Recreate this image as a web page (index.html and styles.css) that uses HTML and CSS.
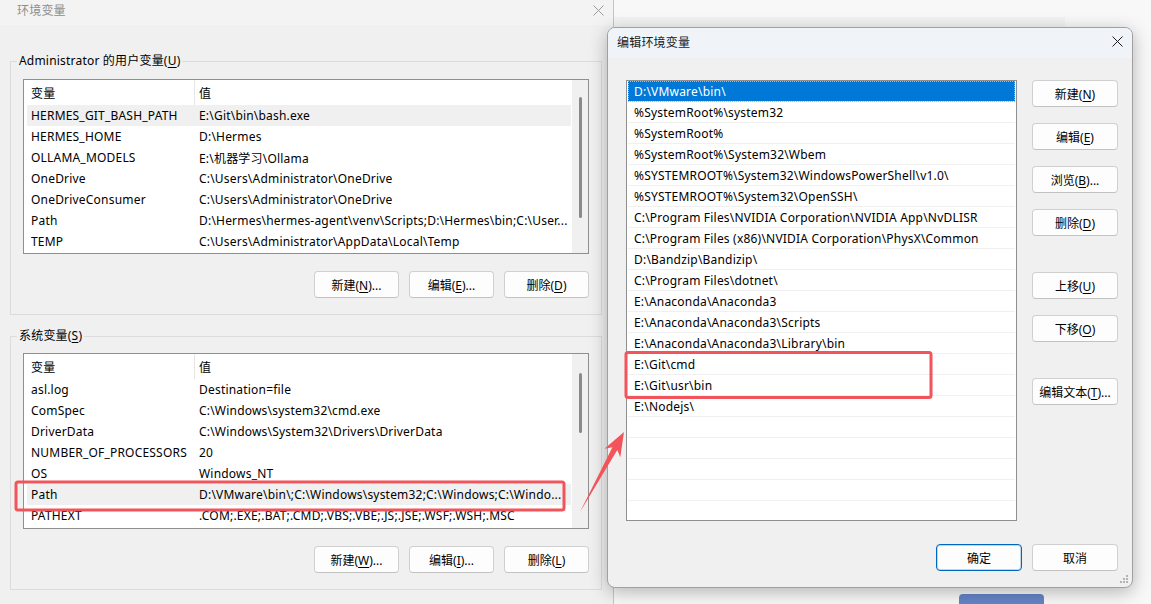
FILE: index.html
```html
<!DOCTYPE html>
<html lang="zh-CN">
<head>
    <meta charset="UTF-8">
    <meta name="viewport" content="width=device-width, initial-scale=1.0">
    <title>环境变量</title>
    <link rel="stylesheet" href="styles.css">
</head>
<body>
<div class="desktop">

    <!-- Fenetre en arriere-plan -->
    <div class="back-window">
        <div class="back-band"></div>
        <div class="back-button"></div>
    </div>

    <!-- Fenetre "环境变量" -->
    <div class="env-window">
        <div class="titlebar inactive">
            <span>环境变量</span>
            <svg class="close" width="11" height="11" viewBox="0 0 11 11"><path d="M0.5 0.5L10.5 10.5M10.5 0.5L0.5 10.5" stroke="#9a9a9a" stroke-width="1"/></svg>
        </div>

        <fieldset class="group user-group">
            <legend>Administrator 的用户变量(<u>U</u>)</legend>
            <div class="listview user-list">
                <div class="lv-body">
                    <div class="lv-head"><span class="c1">变量</span><span class="c2">值</span></div>
                    <div class="lv-row hl"><span class="c1">HERMES_GIT_BASH_PATH</span><span class="c2">E:\Git\bin\bash.exe</span></div>
                    <div class="lv-row"><span class="c1">HERMES_HOME</span><span class="c2">D:\Hermes</span></div>
                    <div class="lv-row"><span class="c1">OLLAMA_MODELS</span><span class="c2">E:\机器学习\Ollama</span></div>
                    <div class="lv-row"><span class="c1">OneDrive</span><span class="c2">C:\Users\Administrator\OneDrive</span></div>
                    <div class="lv-row"><span class="c1">OneDriveConsumer</span><span class="c2">C:\Users\Administrator\OneDrive</span></div>
                    <div class="lv-row"><span class="c1">Path</span><span class="c2">D:\Hermes\hermes-agent\venv\Scripts;D:\Hermes\bin;C:\User...</span></div>
                    <div class="lv-row"><span class="c1">TEMP</span><span class="c2">C:\Users\Administrator\AppData\Local\Temp</span></div>
                </div>
                <div class="vscroll"><div class="thumb user-thumb"></div></div>
            </div>
            <div class="btn-row">
                <button class="btn">新建(<u>N</u>)...</button>
                <button class="btn">编辑(<u>E</u>)...</button>
                <button class="btn">删除(<u>D</u>)</button>
            </div>
        </fieldset>

        <fieldset class="group sys-group">
            <legend>系统变量(<u>S</u>)</legend>
            <div class="listview sys-list">
                <div class="lv-body">
                    <div class="lv-head"><span class="c1">变量</span><span class="c2">值</span></div>
                    <div class="lv-row"><span class="c1">asl.log</span><span class="c2">Destination=file</span></div>
                    <div class="lv-row"><span class="c1">ComSpec</span><span class="c2">C:\Windows\system32\cmd.exe</span></div>
                    <div class="lv-row"><span class="c1">DriverData</span><span class="c2">C:\Windows\System32\Drivers\DriverData</span></div>
                    <div class="lv-row"><span class="c1">NUMBER_OF_PROCESSORS</span><span class="c2">20</span></div>
                    <div class="lv-row"><span class="c1">OS</span><span class="c2">Windows_NT</span></div>
                    <div class="lv-row hl"><span class="c1">Path</span><span class="c2">D:\VMware\bin\;C:\Windows\system32;C:\Windows;C:\Windo...</span></div>
                    <div class="lv-row"><span class="c1">PATHEXT</span><span class="c2">.COM;.EXE;.BAT;.CMD;.VBS;.VBE;.JS;.JSE;.WSF;.WSH;.MSC</span></div>
                </div>
                <div class="vscroll"><div class="thumb sys-thumb"></div></div>
            </div>
            <div class="btn-row">
                <button class="btn">新建(<u>W</u>)...</button>
                <button class="btn">编辑(<u>I</u>)...</button>
                <button class="btn">删除(<u>L</u>)</button>
            </div>
        </fieldset>
    </div>

    <!-- Dialogue "编辑环境变量" -->
    <div class="edit-window">
        <div class="titlebar">
            <span>编辑环境变量</span>
            <svg class="close" width="11" height="11" viewBox="0 0 11 11"><path d="M0.5 0.5L10.5 10.5M10.5 0.5L0.5 10.5" stroke="#1a1a1a" stroke-width="1"/></svg>
        </div>
        <div class="dlg-body">
            <div class="path-list">
                <div class="path-row sel">D:\VMware\bin\</div>
                <div class="path-row">%SystemRoot%\system32</div>
                <div class="path-row">%SystemRoot%</div>
                <div class="path-row">%SystemRoot%\System32\Wbem</div>
                <div class="path-row">%SYSTEMROOT%\System32\WindowsPowerShell\v1.0\</div>
                <div class="path-row">%SYSTEMROOT%\System32\OpenSSH\</div>
                <div class="path-row">C:\Program Files\NVIDIA Corporation\NVIDIA App\NvDLISR</div>
                <div class="path-row">C:\Program Files (x86)\NVIDIA Corporation\PhysX\Common</div>
                <div class="path-row">D:\Bandzip\Bandizip\</div>
                <div class="path-row">C:\Program Files\dotnet\</div>
                <div class="path-row">E:\Anaconda\Anaconda3</div>
                <div class="path-row">E:\Anaconda\Anaconda3\Scripts</div>
                <div class="path-row">E:\Anaconda\Anaconda3\Library\bin</div>
                <div class="path-row">E:\Git\cmd</div>
                <div class="path-row">E:\Git\usr\bin</div>
                <div class="path-row">E:\Nodejs\</div>
                <div class="path-row"></div>
                <div class="path-row"></div>
                <div class="path-row"></div>
                <div class="path-row"></div>
                <div class="path-row"></div>
            </div>
            <div class="side-btns">
                <button class="btn">新建(<u>N</u>)</button>
                <button class="btn">编辑(<u>E</u>)</button>
                <button class="btn">浏览(<u>B</u>)...</button>
                <button class="btn">删除(<u>D</u>)</button>
                <button class="btn spaced">上移(<u>U</u>)</button>
                <button class="btn">下移(<u>O</u>)</button>
                <button class="btn spaced">编辑文本(<u>T</u>)...</button>
            </div>
        </div>
        <div class="dlg-foot">
            <button class="btn default">确定</button>
            <button class="btn">取消</button>
        </div>
        <svg class="grip" width="9" height="9" viewBox="0 0 9 9">
            <rect x="6" y="0" width="2" height="2" fill="#b4b4b4"/>
            <rect x="3" y="3" width="2" height="2" fill="#b4b4b4"/>
            <rect x="6" y="3" width="2" height="2" fill="#b4b4b4"/>
            <rect x="0" y="6" width="2" height="2" fill="#b4b4b4"/>
            <rect x="3" y="6" width="2" height="2" fill="#b4b4b4"/>
            <rect x="6" y="6" width="2" height="2" fill="#b4b4b4"/>
        </svg>
    </div>

    <!-- Annotations rouges -->
    <svg class="annotations" width="1151" height="604" viewBox="0 0 1151 604">
        <rect x="16" y="482" width="548" height="28" rx="2" fill="none" stroke="#f2545b" stroke-width="3"/>
        <rect x="626" y="352.5" width="305" height="45" rx="2" fill="none" stroke="#f2545b" stroke-width="3"/>
        <polygon points="624,432 620.3,457.3 617.3,449.9 580,512 612.4,447.3 604.5,448.7" fill="#f2545b"/>
    </svg>

</div>
</body>
</html>
```

FILE: styles.css
```css
* {
    box-sizing: border-box;
}
body {
    margin: 0;
    font-family: "Noto Sans", "Noto Sans CJK SC", sans-serif;
    font-size: 12px;
    letter-spacing: 0.2px;
    color: #000;
    background-color: #f7f7f8;
}
u {
    text-underline-offset: 2px;
}
.desktop {
    position: relative;
    width: 1151px;
    height: 604px;
    overflow: hidden;
}

/* fenetre derriere */
.back-window {
    position: absolute;
    left: 614px;
    top: 0;
    right: 0;
    bottom: 0;
    background-color: #f8f8f8;
}
.back-band {
    margin-top: 17px;
    width: 451px;
    height: 11px;
    background-color: #f2f2f2;
}
.back-button {
    margin: 566px 0 0 345px;
    width: 85px;
    height: 20px;
    border-radius: 4px;
    background-color: #6584c6;
}

/* fenetre principale */
.env-window {
    position: absolute;
    left: 0;
    top: 0;
    width: 614px;
    height: 604px;
    background-color: #f0f0f0;
    border-right: 1px solid #c4c4c4;
}
.titlebar {
    display: flex;
    justify-content: space-between;
}
.titlebar.inactive {
    height: 25px;
    padding: 3px 9px 0 17px;
    background-color: #f3f3f3;
    color: #8e8e8e;
    line-height: 16px;
}
.titlebar.inactive .close {
    margin-top: 2px;
}

.group {
    margin: 28px 0 0 10px;
    width: 592px;
    border: 1px solid #dcdcdc;
    padding: 10px 12px 16px 12px;
    min-width: 0;
}
.group legend {
    margin-left: -6px;
    padding: 0 2px;
    line-height: 16px;
}
.sys-group {
    margin-top: 13px;
    padding-top: 9px;
}

.listview {
    display: flex;
    height: 175px;
    border: 1px solid #8f8f8f;
    background-color: #fff;
}
.sys-list {
    height: 176px;
}
.lv-body {
    flex: 1;
    padding: 0 1px 0 3px;
    overflow: hidden;
}
.lv-head {
    display: flex;
    height: 25px;
}
.lv-head span {
    display: flex;
    align-items: center;
}
.lv-head .c1 {
    border-right: 1px solid #e5e5e5;
}
.lv-row {
    display: flex;
    align-items: center;
    height: 21px;
}
.lv-row.hl {
    background-color: #f0f0f0;
}
.c1 {
    flex: none;
    width: 168px;
    padding-left: 4px;
    white-space: nowrap;
    overflow: hidden;
}
.c2 {
    flex: 1;
    padding-left: 4px;
    white-space: nowrap;
    overflow: hidden;
}
.vscroll {
    width: 16px;
    background-color: #f0f0f0;
    display: flex;
    justify-content: center;
}
.thumb {
    width: 3px;
    border-radius: 2px;
    background-color: #8a8a8a;
}
.user-thumb {
    margin-top: 17px;
    height: 121px;
}
.sys-thumb {
    margin-top: 19px;
    height: 60px;
}

.btn-row {
    display: flex;
    justify-content: flex-end;
    gap: 10px;
    margin-top: 17px;
}
.btn {
    width: 85px;
    height: 27px;
    padding: 0;
    border: 1px solid #d0d0d0;
    border-bottom-color: #c2c2c2;
    border-radius: 4px;
    background-color: #fdfdfd;
    font: inherit;
    letter-spacing: 0;
    color: #000;
}

/* dialogue d'edition */
.edit-window {
    position: absolute;
    left: 607px;
    top: 27px;
    width: 526px;
    height: 561px;
    display: flex;
    flex-direction: column;
    background-color: #f0f0f0;
    border: 1px solid #a0a0a0;
    border-radius: 8px;
    box-shadow: 0 4px 18px rgba(0, 0, 0, 0.28);
    overflow: hidden;
}
.edit-window .titlebar {
    height: 30px;
    align-items: center;
    padding: 0 9px 3px 9px;
    background-color: #f0f4f9;
    color: #1a1a1a;
}
.dlg-body {
    display: flex;
    gap: 15px;
    padding: 22px 14px 0 18px;
}
.path-list {
    width: 392px;
    height: 441px;
    padding: 0 1px;
    border: 1px solid #8f8f8f;
    background-color: #fff;
    overflow: hidden;
}
.path-row {
    height: 21px;
    line-height: 20px;
    padding: 1px 0 0 6px;
    border-bottom: 1px solid #f0f0f0;
    white-space: nowrap;
}
.path-row.sel {
    background-color: #0078d7;
    color: #fff;
    outline: 1px dotted #f3a66a;
    outline-offset: -1px;
}
.side-btns {
    display: flex;
    flex-direction: column;
    gap: 16px;
}
.side-btns .btn,
.dlg-foot .btn {
    width: 86px;
}
.side-btns .spaced {
    margin-top: 20px;
}
.dlg-foot {
    display: flex;
    justify-content: flex-end;
    gap: 10px;
    padding: 23px 14px 0 0;
}
.btn.default {
    border-color: #0067c0;
    box-shadow: inset 0 0 0 1px rgba(0, 103, 192, 0.25);
}
.grip {
    position: absolute;
    right: 3px;
    bottom: 3px;
}

.annotations {
    position: absolute;
    left: 0;
    top: 0;
    pointer-events: none;
}
```
